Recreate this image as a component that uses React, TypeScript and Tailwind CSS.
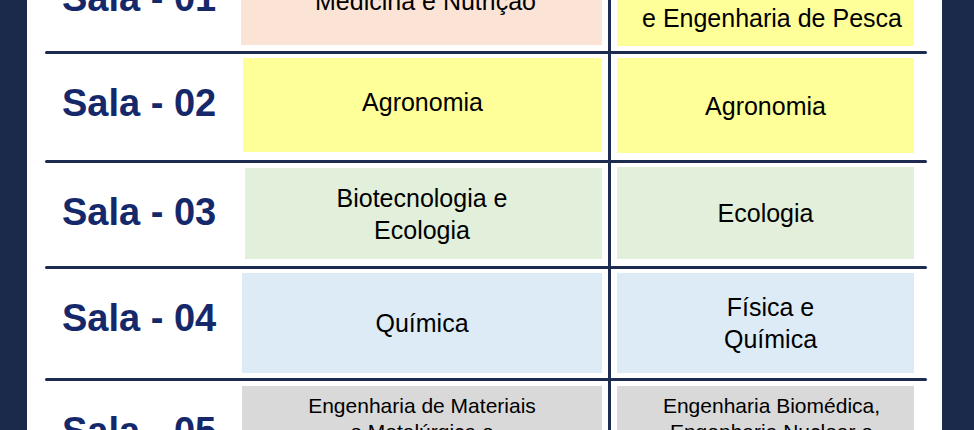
type Cell = {
  lines: string[];
  bg: string;
  box: string;
  text: string;
};

type Row = {
  label: string;
  height: string;
  labelPad: string;
  left: Cell;
  right: Cell;
};

const rows: Row[] = [
  {
    label: 'Sala - 01',
    height: 'h-[129px]',
    labelPad: 'pt-[57px]',
    left: {
      lines: ['Medicina e Nutrição'],
      bg: 'bg-[#fbe4d6]',
      box: 'mt-[4px] h-[119px] ml-0 justify-end pb-[28px] pl-[8px]',
      text: 'text-[25px] leading-[32px]',
    },
    right: {
      lines: ['e Engenharia de Pesca'],
      bg: 'bg-[#ffff99]',
      box: 'mt-[4px] h-[120px] justify-end pb-[12px] pl-[13px]',
      text: 'text-[25px] leading-[32px]',
    },
  },
  {
    label: 'Sala - 02',
    height: 'h-[106px]',
    labelPad: 'pt-[30px]',
    left: {
      lines: ['Agronomia'],
      bg: 'bg-[#ffff99]',
      box: 'mt-[4px] h-[94px] ml-[2px] justify-center pb-[6px]',
      text: 'text-[25px] leading-[32px]',
    },
    right: {
      lines: ['Agronomia'],
      bg: 'bg-[#ffff99]',
      box: 'mt-[4px] h-[95px] justify-center',
      text: 'text-[25px] leading-[32px]',
    },
  },
  {
    label: 'Sala - 03',
    height: 'h-[103px]',
    labelPad: 'pt-[30px]',
    left: {
      lines: ['Biotecnologia e', 'Ecologia'],
      bg: 'bg-[#e2efda]',
      box: 'mt-[5px] h-[91px] ml-[4px] justify-center pr-[3px]',
      text: 'text-[25px] leading-[32px]',
    },
    right: {
      lines: ['Ecologia'],
      bg: 'bg-[#e2efda]',
      box: 'mt-[4px] h-[92px] justify-center',
      text: 'text-[25px] leading-[32px]',
    },
  },
  {
    label: 'Sala - 04',
    height: 'h-[109px]',
    labelPad: 'pt-[30px]',
    left: {
      lines: ['Química'],
      bg: 'bg-[#ddebf7]',
      box: 'mt-[4px] h-[100px] ml-[1px] justify-center',
      text: 'text-[25px] leading-[32px]',
    },
    right: {
      lines: ['Física e', 'Química'],
      bg: 'bg-[#ddebf7]',
      box: 'mt-[4px] h-[100px] justify-center pl-[10px]',
      text: 'text-[25px] leading-[32px]',
    },
  },
  {
    label: 'Sala - 05',
    height: 'h-[110px]',
    labelPad: 'pt-[31px]',
    left: {
      lines: ['Engenharia de Materiais', 'e Metalúrgica e'],
      bg: 'bg-[#d9d9d9]',
      box: 'mt-[5px] h-[100px] ml-[1px] justify-start pt-[7px]',
      text: 'text-[21px] leading-[26px]',
    },
    right: {
      lines: ['Engenharia Biomédica,', 'Engenharia Nuclear e'],
      bg: 'bg-[#d9d9d9]',
      box: 'mt-[5px] h-[100px] justify-start pt-[7px] pl-[12px]',
      text: 'text-[21px] leading-[26px]',
    },
  },
];

function CellBox({ cell, side }: { cell: Cell; side: 'left' | 'right' }) {
  return (
    <div className={side === 'left' ? 'mr-[6px]' : 'ml-[6px] mr-[13px]'}>
      <div className={`flex flex-col items-center text-center text-black ${cell.bg} ${cell.box} ${cell.text}`}>
        {cell.lines.map((line) => (
          <span key={line} className="whitespace-nowrap">
            {line}
          </span>
        ))}
      </div>
    </div>
  );
}

function Divider() {
  return <div className="h-[3px] rounded-full bg-[#1c2b4f]" />;
}

export default function App() {
  return (
    <div
      className="flex h-[430px] w-[974px] overflow-hidden bg-[#1b2a4b] pl-[27px] pr-[32px]"
      style={{ fontFamily: '"Liberation Sans", Arial, sans-serif' }}
    >
      <div className="flex-1 overflow-hidden bg-white pl-[18px] pr-[15px]">
        <div className="-mt-[78px]">
          {rows.map((row, i) => (
            <div key={row.label}>
              {i > 0 && <Divider />}
              <div className={`grid grid-cols-[196px_367px_3px_1fr] ${row.height}`}>
                <div className={`pl-[17px] ${row.labelPad}`}>
                  <p className="whitespace-nowrap text-[38px] font-bold leading-[38px] text-[#15286a]">{row.label}</p>
                </div>
                <CellBox cell={row.left} side="left" />
                <div className="bg-[#1c2b4f]" />
                <CellBox cell={row.right} side="right" />
              </div>
            </div>
          ))}
        </div>
      </div>
    </div>
  );
}
